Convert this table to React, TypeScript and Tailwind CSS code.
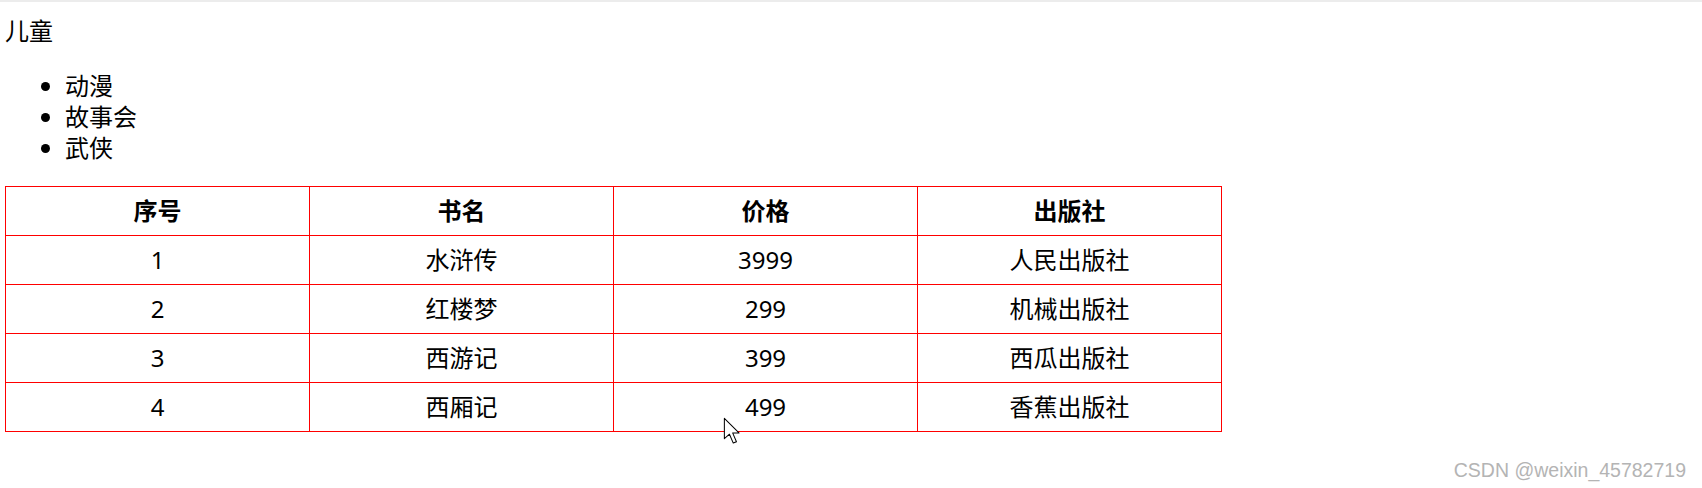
const books = [
  { id: 1, name: "水浒传", price: 3999, press: "人民出版社" },
  { id: 2, name: "红楼梦", price: 299, press: "机械出版社" },
  { id: 3, name: "西游记", price: 399, press: "西瓜出版社" },
  { id: 4, name: "西厢记", price: 499, press: "香蕉出版社" },
];

function Cursor() {
  return (
    <svg
      className="absolute left-[723px] top-[417px]"
      width="18"
      height="28"
      viewBox="0 0 14 22"
    >
      <path
        d="M1 1 L1 17 L5 13.5 L8 20.5 L10.5 19.5 L7.5 12.5 L12.5 12.5 Z"
        fill="#fff"
        stroke="#000"
        strokeWidth="0.8"
        strokeLinejoin="round"
      />
    </svg>
  );
}

export default function App() {
  return (
    <div className="relative w-[1702px] h-[488px] bg-white text-black font-['Noto_Sans','Noto_Sans_CJK_SC',sans-serif] text-[24px] leading-[30px] overflow-hidden">
      <div className="h-[2px] bg-[#ececec]" />
      <div className="pl-[5px]">
        <div className="mt-[14px]">儿童</div>
        <ul className="list-disc mt-[24px] pl-[60px] leading-[31px]">
          <li>动漫</li>
          <li>故事会</li>
          <li>武侠</li>
        </ul>
        <table className="mt-[23px] w-[1217px] table-fixed border-collapse">
          <thead>
            <tr className="h-[49px]">
              <th className="border border-[#ff0000] font-bold">序号</th>
              <th className="border border-[#ff0000] font-bold">书名</th>
              <th className="border border-[#ff0000] font-bold">价格</th>
              <th className="border border-[#ff0000] font-bold">出版社</th>
            </tr>
          </thead>
          <tbody>
            {books.map((b) => (
              <tr key={b.id} className="h-[49px]">
                <td className="border border-[#ff0000] text-center">{b.id}</td>
                <td className="border border-[#ff0000] text-center">{b.name}</td>
                <td className="border border-[#ff0000] text-center">{b.price}</td>
                <td className="border border-[#ff0000] text-center">{b.press}</td>
              </tr>
            ))}
          </tbody>
        </table>
      </div>
      <Cursor />
      <div className="absolute right-[16px] bottom-[6px] font-['Liberation_Sans',sans-serif] text-[19.5px] leading-[24px] text-[#b4b4b4]">
        CSDN @weixin_45782719
      </div>
    </div>
  );
}
